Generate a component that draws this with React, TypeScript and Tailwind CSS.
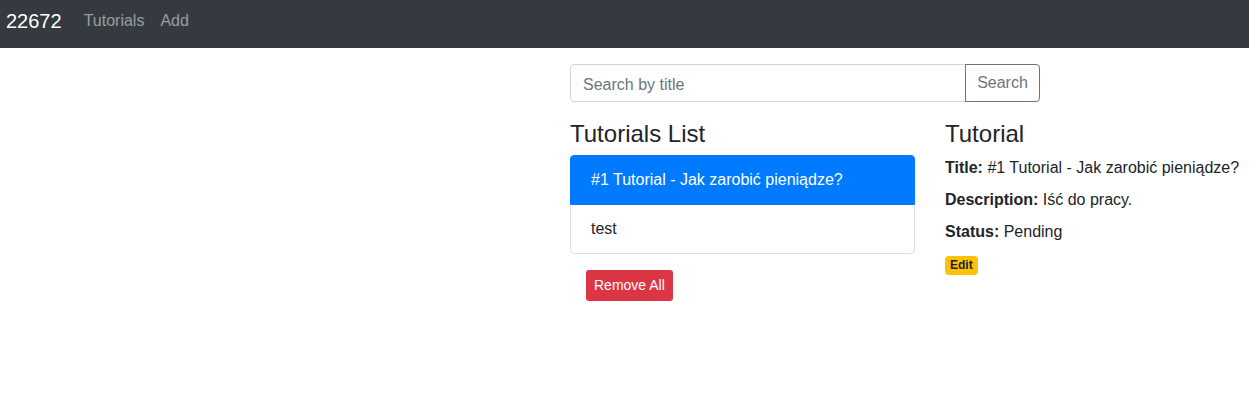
import { useState } from "react";

// Simple tutorials CRUD page: navbar, search row, list + selected details.
const TUTORIALS = [
  { id: 1, title: "#1 Tutorial - Jak zarobić pieniądze?", description: "Iść do pracy.", published: false },
  { id: 2, title: "test", description: "", published: false },
];

export default function App() {
  const [active, setActive] = useState(0);
  const [query, setQuery] = useState("");
  const current = TUTORIALS[active];

  return (
    <div className="min-h-[401px] w-full overflow-x-hidden bg-white text-[#212529] text-base leading-6" style={{ fontFamily: '"Liberation Sans", Arial, sans-serif' }}>
      <nav className="flex h-12 items-center bg-[#343a40] pb-[6px] pl-[6px]">
        <a href="#" className="mr-[14px] text-[20px] leading-[30px] text-white">22672</a>
        <div className="flex">
          <a href="#" className="px-2 text-white/50 hover:text-white/75">Tutorials</a>
          <a href="#" className="px-2 text-white/50 hover:text-white/75">Add</a>
        </div>
      </nav>

      <div className="mt-4 ml-[570px] w-[720px]">
        <div className="mb-4 flex w-[470px]">
          <input
            value={query}
            onChange={e => setQuery(e.target.value)}
            placeholder="Search by title"
            className="h-[38px] flex-1 rounded-l-[4px] border border-[#ced4da] px-3 pt-[3px] text-base text-[#495057] placeholder:text-[#6c757d] outline-none"
          />
          <button className="-ml-px h-[38px] w-[75px] rounded-r-[4px] border border-[#6c757d] pb-px text-base text-[#6c757d] hover:bg-[#6c757d] hover:text-white">
            Search
          </button>
        </div>

        <div className="flex gap-[30px]">
          <div className="w-[345px]">
            <h4 className="mb-2 pt-[2px] text-[24px] leading-[27px] font-medium">Tutorials List</h4>
            <ul className="flex flex-col">
              {TUTORIALS.map((t, i) => (
                <li
                  key={t.id}
                  onClick={() => setActive(i)}
                  className={`-mt-px flex h-[50px] cursor-pointer items-center border px-5 first:mt-0 first:rounded-t-[4px] last:rounded-b-[4px] ${
                    i === active ? "relative border-[#007bff] bg-[#007bff] text-white" : "border-black/[.125]"
                  }`}
                >
                  {t.title}
                </li>
              ))}
            </ul>
            <button className="m-4 h-[31px] rounded-[3px] bg-[#dc3545] px-2 text-[14px] leading-[21px] text-white">Remove All</button>
          </div>

          <div className="w-[345px]">
            <h4 className="mb-2 pt-[2px] text-[24px] leading-[27px] font-medium">Tutorial</h4>
            <div className="pt-px">
              <label className="mb-2 inline-block font-bold">Title:</label> {current.title}
            </div>
            <div>
              <label className="mb-2 inline-block font-bold">Description:</label> {current.description}
            </div>
            <div>
              <label className="mb-2 inline-block font-bold">Status:</label> {current.published ? "Published" : "Pending"}
            </div>
            <a href="#" className="inline-block rounded-[4px] bg-[#ffc107] px-[5px] pt-[3px] pb-[4px] text-[12px] leading-3 font-bold text-[#212529]">Edit</a>
          </div>
        </div>
      </div>
    </div>
  );
}
